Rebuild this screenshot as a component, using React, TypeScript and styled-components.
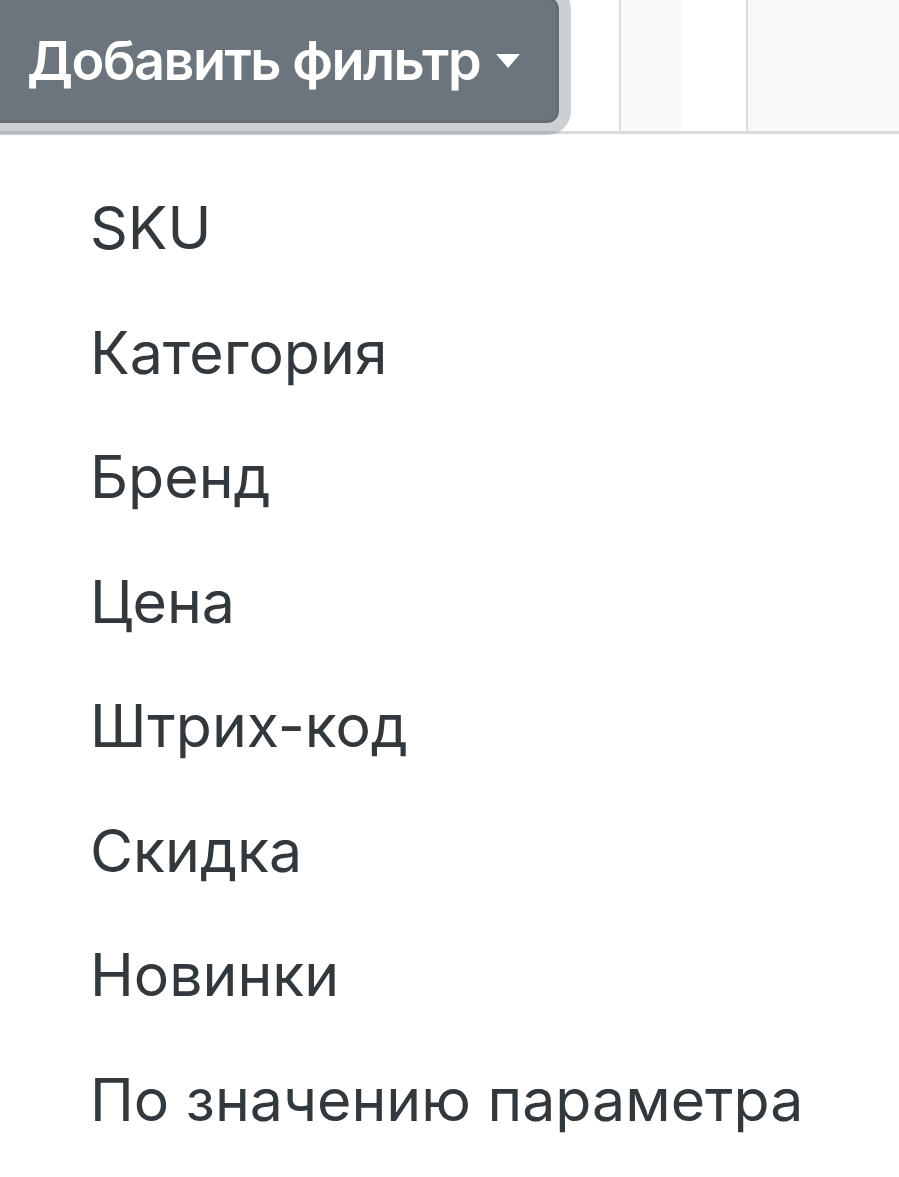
import styled, { createGlobalStyle } from 'styled-components'

const GlobalStyle = createGlobalStyle`
  html, body {
    margin: 0;
    padding: 0;
    background: #ffffff;
    overflow: hidden;
  }
  body {
    font-family: Inter, "Noto Sans", "Liberation Sans", sans-serif;
  }
`

const Toolbar = styled.div`
  display: flex;
  align-items: stretch;
  height: 131px;
  border-bottom: 3px solid #dadada;
`

const FilterButton = styled.button`
  position: relative;
  z-index: 1;
  display: flex;
  align-items: center;
  box-sizing: border-box;
  width: 581px;
  height: 126px;
  margin: -3px 0 0 -22px;
  padding: 0 0 0 46px;
  border: 3px solid #656c73;
  border-radius: 12px;
  background: #6c757d;
  color: #ffffff;
  font-family: Inter, "Noto Sans", sans-serif;
  font-size: 54px;
  font-weight: 600;
  letter-spacing: -1.5px;
  white-space: nowrap;
  cursor: pointer;
  box-shadow: 0 0 0 12px rgba(130, 138, 145, 0.4);
`

const Caret = styled.span`
  display: inline-block;
  width: 0;
  height: 0;
  margin-left: 16px;
  margin-top: 2px;
  border-top: 14px solid #ffffff;
  border-left: 12px solid transparent;
  border-right: 12px solid transparent;
`

const Column = styled.div<{ $width?: number; $bg: string; $divider?: boolean }>`
  box-sizing: border-box;
  ${(p) => (p.$width ? `width: ${p.$width}px;` : 'flex: 1;')}
  background: ${(p) => p.$bg};
  border-left: ${(p) => (p.$divider ? '2px solid #dcdcdc' : 'none')};
`

const Gap = styled.div`
  width: 60px;
`

const Menu = styled.ul`
  list-style: none;
  margin: 0;
  padding: 32px 0 0;
`

const MenuItem = styled.li`
  padding: 0 0 0 90px;
  height: 124.57px;
  line-height: 124.57px;
  font-size: 59px;
  font-weight: 400;
  color: #33383d;
  white-space: nowrap;
  cursor: pointer;
`

const items = [
  'SKU',
  'Категория',
  'Бренд',
  'Цена',
  'Штрих-код',
  'Скидка',
  'Новинки',
  'По значению параметра',
]

export default function App() {
  return (
    <>
      <GlobalStyle />
      <Toolbar>
        <FilterButton>
          Добавить фильтр
          <Caret />
        </FilterButton>
        <Gap />
        <Column $width={63} $bg="#f8f9fa" $divider />
        <Column $width={64} $bg="#ffffff" />
        <Column $bg="#f9f9f9" $divider />
      </Toolbar>
      <Menu>
        {items.map((item) => (
          <MenuItem key={item}>{item}</MenuItem>
        ))}
      </Menu>
    </>
  )
}
